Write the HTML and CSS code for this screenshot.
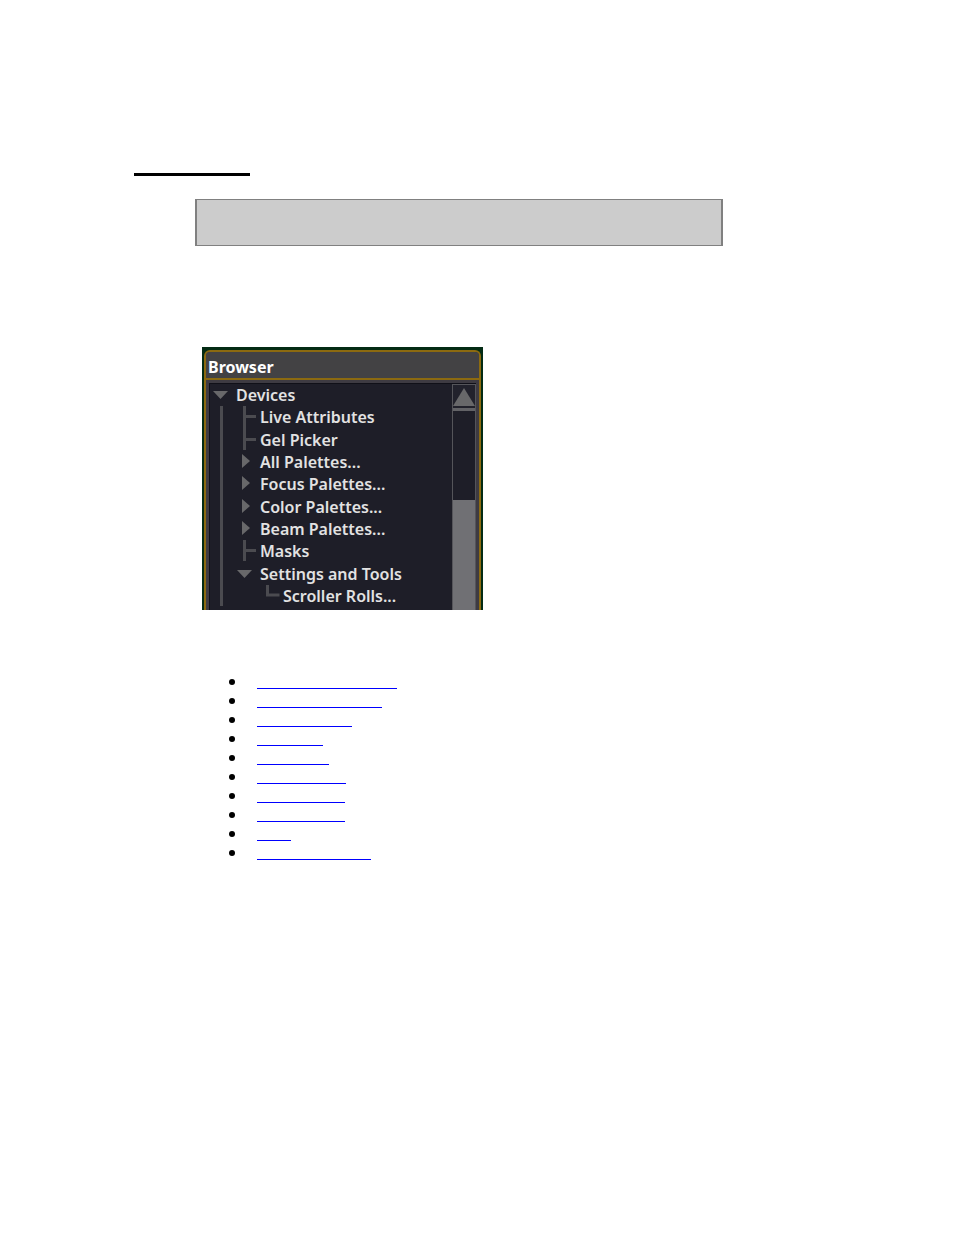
FILE: index.html
```html
<!DOCTYPE html>
<html lang="en">
<head>
<meta charset="utf-8">
<title>Browser</title>
<link rel="stylesheet" href="styles.css">
</head>
<body>
<main class="page">
  <div class="heading-rule"></div>
  <div class="note"></div>
  <section class="browser">
    <div class="frame">
      <h2 class="title">Browser</h2>
      <div class="body">
        <ul class="tree">
          <li class="row"><svg class="mark" viewBox="0 0 24 22"><path class="fill" d="M1 7h15l-7.500 8z"/></svg>Devices</li>
          <li class="row child"><svg class="mark" viewBox="0 0 24 22"><path class="line" d="M8.500 0v23M8 10.500h12"/></svg>Live Attributes</li>
          <li class="row child"><svg class="mark" viewBox="0 0 24 22"><path class="line" d="M8.500 0v21M8 10.500h12"/></svg>Gel Picker</li>
          <li class="row child"><svg class="mark" viewBox="0 0 24 22"><path class="fill" d="M6 3v14l8-7z"/></svg>All Palettes...</li>
          <li class="row child"><svg class="mark" viewBox="0 0 24 22"><path class="fill" d="M6 3v14l8-7z"/></svg>Focus Palettes...</li>
          <li class="row child"><svg class="mark" viewBox="0 0 24 22"><path class="fill" d="M6 3v14l8-7z"/></svg>Color Palettes...</li>
          <li class="row child"><svg class="mark" viewBox="0 0 24 22"><path class="fill" d="M6 3v14l8-7z"/></svg>Beam Palettes...</li>
          <li class="row child"><svg class="mark" viewBox="0 0 24 22"><path class="line" d="M8.500 0v21M8 10.500h12"/></svg>Masks</li>
          <li class="row child"><svg class="mark" viewBox="0 0 24 22"><path class="fill" d="M1 7h15l-7.500 8z"/></svg>Settings and Tools</li>
          <li class="row grandchild"><svg class="mark" viewBox="0 0 24 22"><path class="line" d="M8.500 0v10h12"/></svg>Scroller Rolls...</li>
        </ul>
        <div class="scrollbar">
          <button class="up" type="button" aria-label="Scroll up"><svg class="arrow" viewBox="0 0 22 22"><path class="fill" d="M11 3L22 21H0z"/></svg></button>
          <div class="track"></div>
          <div class="thumb"></div>
        </div>
      </div>
    </div>
  </section>
  <ul class="links">
    <li class="item"><a class="link w140" href="#s1"></a></li>
    <li class="item"><a class="link w125" href="#s2"></a></li>
    <li class="item"><a class="link w95" href="#s3"></a></li>
    <li class="item"><a class="link w66" href="#s4"></a></li>
    <li class="item"><a class="link w72" href="#s5"></a></li>
    <li class="item"><a class="link w89" href="#s6"></a></li>
    <li class="item"><a class="link w88" href="#s7"></a></li>
    <li class="item"><a class="link w88" href="#s8"></a></li>
    <li class="item"><a class="link w34" href="#s9"></a></li>
    <li class="item"><a class="link w114" href="#s10"></a></li>
  </ul>
</main>
</body>
</html>
```
FILE: styles.css
```css
* { box-sizing: border-box; }
body { margin: 0; background: #fff; font-family: "Noto Sans", "Open Sans", sans-serif; }
.page { display: flex; flex-direction: column; padding: 173px 231px 64px 134px; }
.heading-rule { width: 116px; height: 3px; background: #000; }
.note { height: 47px; margin: 23px 0 0 61px; background: #ccc; border: solid #808080; border-width: 1px 2px; }
.browser { width: 281px; margin: 101px 0 0 68px; padding: 3px 2px 0; background: #032b14; }
.frame { border: solid #8c6a10; border-width: 2px 2px 0; border-radius: 6px 6px 0 0; background: #3e3b42; overflow: hidden; }
.title { margin: 0; padding-left: 2px; height: 28px; line-height: 30px; font-size: 16px; font-weight: 700; color: #fff; background: #434244; border-bottom: 2px solid #8c6a10; }
.body { display: flex; margin: 3px 3px 0; background: #1e1e28; border: solid #101018; border-width: 1px 0 0 1px; }
.tree { position: relative; flex: 1; display: grid; grid-auto-rows: 1fr; height: 226px; margin: 0; padding: 0 0 3px 2px; list-style: none; color: #e2e2e2; font-size: 16px; font-weight: 600; line-height: 22px; }
.tree::before { content: ""; position: absolute; left: 10px; top: 22px; bottom: 4px; width: 3px; background: #4b4b50; }
.row { display: flex; align-items: center; white-space: nowrap; }
.child { padding-left: 24px; }
.grandchild { padding-left: 47px; }
.mark { width: 24px; height: 22px; flex: none; overflow: visible; }
.fill { fill: #68686a; }
.line { fill: none; stroke: #4b4b50; stroke-width: 3; }
.scrollbar { width: 24px; display: flex; flex-direction: column; border: solid #55555a; border-width: 1px 1px 0; }
.up { height: 23px; padding: 0; border: 0; background: #22222c; display: flex; }
.arrow { width: 22px; height: 22px; }
.track { height: 92px; border-top: 3px solid #626266; }
.thumb { flex: 1; background: #707074; }
.links { margin: 62px 0 0 95px; padding: 0; list-style: none; }
.item { display: flex; align-items: center; height: 19px; gap: 22px; }
.item::before { content: ""; width: 6px; height: 6px; border-radius: 50%; background: #000; }
.link { height: 14px; border-bottom: 1px solid #00f; }
.w140 { width: 140px; }
.w125 { width: 125px; }
.w114 { width: 114px; }
.w95 { width: 95px; }
.w89 { width: 89px; }
.w88 { width: 88px; }
.w72 { width: 72px; }
.w66 { width: 66px; }
.w34 { width: 34px; }
```
